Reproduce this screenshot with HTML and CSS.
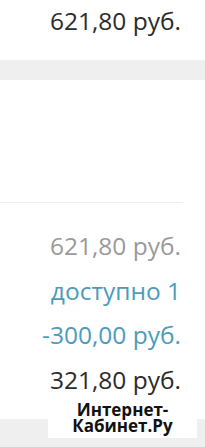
FILE: index.html
```html
<!DOCTYPE html>
<html lang="ru">
<head>
<meta charset="utf-8">
<link rel="stylesheet" href="styles.css">
</head>
<body>
<div class="page">
  <div class="total-top">621,80 руб.</div>
  <div class="band"></div>
  <div class="blank"></div>
  <div class="divider"></div>
  <div class="summary">
    <div class="amount muted">621,80 руб.</div>
    <div class="amount accent">доступно 1</div>
    <div class="amount accent">-300,00 руб.</div>
    <div class="amount dark">321,80 руб.</div>
  </div>
  <div class="footer-band"></div>
  <div class="watermark">
    <div class="wm-line">Интернет-</div>
    <div class="wm-line">Кабинет.Ру</div>
  </div>
</div>
</body>
</html>
```

FILE: styles.css
```css
html, body {
  margin: 0;
  padding: 0;
  background: #ffffff;
}
.page {
  position: relative;
  width: 205px;
  height: 447px;
  overflow: hidden;
  font-family: "Open Sans", "Noto Sans", sans-serif;
}
.total-top {
  height: 60px;
  box-sizing: border-box;
  padding: 4px 24px 0 0;
  text-align: right;
  font-size: 24.5px;
  line-height: 34px;
  color: #2b2b2b;
}
.band {
  height: 20px;
  background: #efefef;
}
.blank {
  height: 122px;
}
.divider {
  width: 183px;
  height: 1px;
  background: #ececec;
}
.summary {
  display: flex;
  flex-direction: column;
  padding: 21px 24px 0 0;
}
.amount {
  text-align: right;
  font-size: 24.5px;
  line-height: 44.7px;
}
.muted { color: #9a9a9a; }
.accent { color: #4d9bbb; }
.dark { color: #2b2b2b; }
.footer-band {
  position: absolute;
  left: 0;
  right: 0;
  top: 419px;
  bottom: 0;
  background: #efefef;
}
.watermark {
  position: absolute;
  left: 48px;
  top: 399px;
  width: 149px;
  height: 39px;
  background: #ffffff;
  display: flex;
  flex-direction: column;
  align-items: center;
  padding-top: 3px;
  box-sizing: border-box;
  font-family: "Open Sans", "Noto Sans", sans-serif;
  font-weight: 700;
  font-size: 17px;
  color: #111111;
}
.wm-line {
  height: 15.5px;
  line-height: 15.5px;
  white-space: nowrap;
}
```
